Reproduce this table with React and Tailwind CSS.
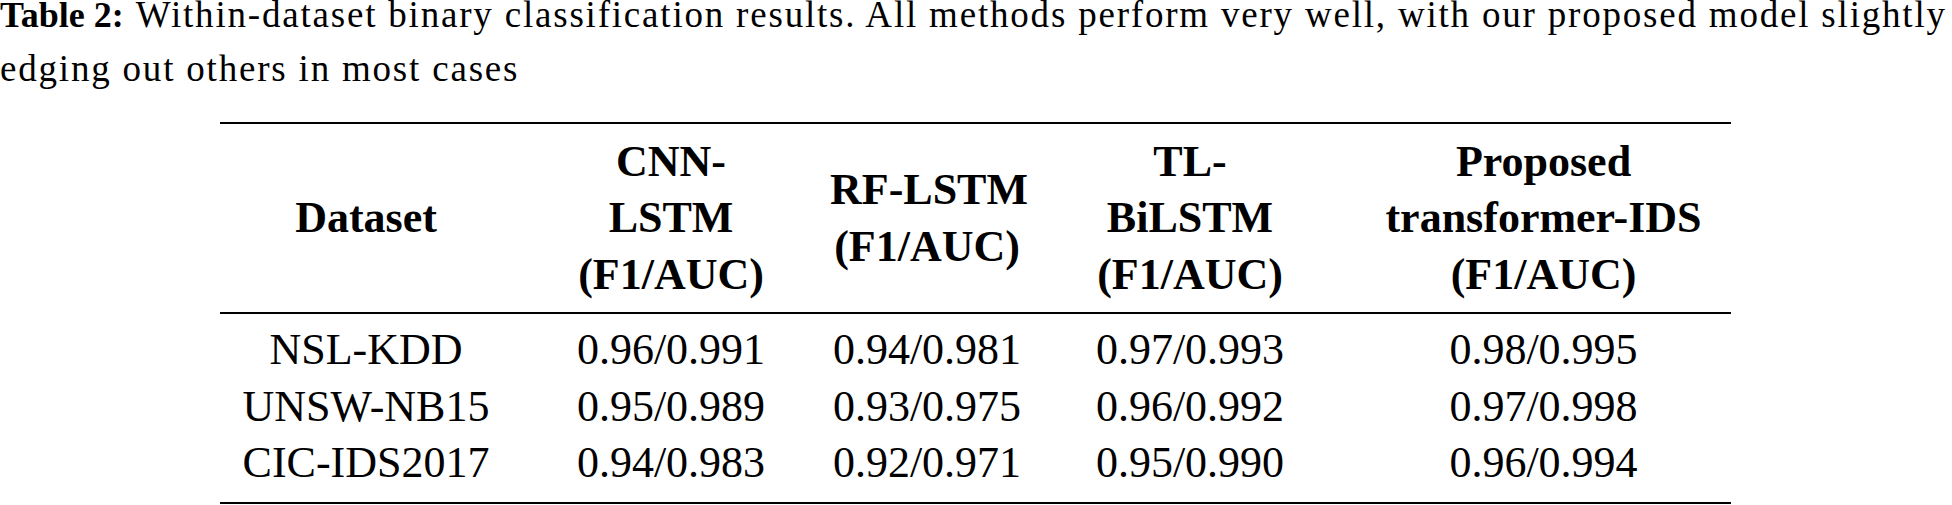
const columns = [
  { key: 'dataset', label: ['Dataset'], width: 'w-[292px]' },
  { key: 'cnn', label: ['CNN-', 'LSTM', '(F1/AUC)'], width: 'w-[318px]' },
  { key: 'rf', label: ['RF-LSTM', '(F1/AUC)'], width: 'w-[194px]' },
  { key: 'tl', label: ['TL-', 'BiLSTM', '(F1/AUC)'], width: 'w-[332px]' },
  { key: 'proposed', label: ['Proposed', 'transformer-IDS', '(F1/AUC)'], width: 'w-[375px]' }
];

const rows = [
  { dataset: 'NSL-KDD', cnn: '0.96/0.991', rf: '0.94/0.981', tl: '0.97/0.993', proposed: '0.98/0.995' },
  { dataset: 'UNSW-NB15', cnn: '0.95/0.989', rf: '0.93/0.975', tl: '0.96/0.992', proposed: '0.97/0.998' },
  { dataset: 'CIC-IDS2017', cnn: '0.94/0.983', rf: '0.92/0.971', tl: '0.95/0.990', proposed: '0.96/0.994' }
];

function App() {
  return (
    <div className="min-h-[505px] w-[1952px] overflow-hidden bg-white text-black [font-family:'Liberation_Serif',serif]">
      <p className="mt-[-12px] whitespace-nowrap text-[37px] leading-[54.4px]">
        <span className="mr-[12px] text-[36px] font-bold">Table 2:</span>
        <span className="tracking-[1.8px]">
          Within-dataset binary classification results. All methods perform very well, with our proposed model slightly
        </span>
        <br />
        <span className="tracking-[1.8px]">edging out others in most cases</span>
      </p>

      <div className="mt-[25px] flex justify-start pl-[220px]">
        <table className="w-[1511px] table-fixed border-collapse text-center text-[44px] leading-[56.5px]">
          <colgroup>
            {columns.map((column) => (
              <col key={column.key} className={column.width} />
            ))}
          </colgroup>
          <thead>
            <tr className="border-t-2 border-b-2 border-black">
              {columns.map((column) => (
                <th key={column.key} className="px-0 pt-[10px] pb-[9px] align-middle font-bold whitespace-nowrap">
                  {column.label.map((line) => (
                    <div key={line}>{line}</div>
                  ))}
                </th>
              ))}
            </tr>
          </thead>
          <tbody className="border-b-2 border-black">
            {rows.map((row, index) => (
              <tr key={row.dataset}>
                {columns.map((column) => (
                  <td
                    key={column.key}
                    className={`p-0 whitespace-nowrap ${index === 0 ? 'pt-[8px]' : ''} ${index === rows.length - 1 ? 'pb-[10px]' : ''}`}
                  >
                    {row[column.key]}
                  </td>
                ))}
              </tr>
            ))}
          </tbody>
        </table>
      </div>
    </div>
  );
}

export default App;
